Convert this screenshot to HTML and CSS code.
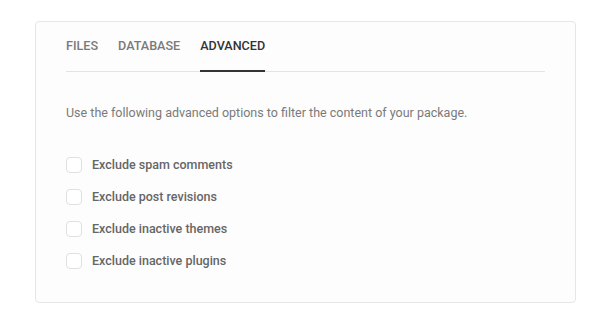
FILE: index.html
```html
<!DOCTYPE html>
<html>
<head>
<meta charset="utf-8">
<link rel="stylesheet" href="styles.css">
</head>
<body>
<div class="card">
  <div class="tabs">
    <div class="tab">FILES</div>
    <div class="tab">DATABASE</div>
    <div class="tab active">ADVANCED</div>
  </div>
  <p class="intro">Use the following advanced options to filter the content of your package.</p>
  <div class="options">
    <label class="option"><span class="box"></span><span>Exclude spam comments</span></label>
    <label class="option"><span class="box"></span><span>Exclude post revisions</span></label>
    <label class="option"><span class="box"></span><span>Exclude inactive themes</span></label>
    <label class="option"><span class="box"></span><span>Exclude inactive plugins</span></label>
  </div>
</div>
</body>
</html>
```
FILE: styles.css
```css
html, body {
  margin: 0;
  padding: 0;
  background: #ffffff;
  font-family: Roboto, "Liberation Sans", sans-serif;
}
.card {
  box-sizing: border-box;
  margin: 21px 0 0 35px;
  width: 541px;
  height: 282px;
  border: 1px solid #e6e6e6;
  border-radius: 4px;
  background: #fdfdfd;
  padding: 16px 30px 0 30px;
}
.tabs {
  display: flex;
  gap: 20px;
  border-bottom: 1px solid #e4e4e4;
}
.tab {
  font-size: 12.6px;
  font-weight: 500;
  line-height: 16px;
  color: #7a7a7a;
  padding-bottom: 16px;
  border-bottom: 2px solid transparent;
  margin-bottom: -1px;
}
.tab.active {
  color: #333333;
  border-bottom-color: #333333;
}
.intro {
  margin: 33px 0 0 0;
  font-size: 12.5px;
  line-height: 16px;
  color: #7a7a7a;
}
.options {
  display: flex;
  flex-direction: column;
  gap: 16px;
  margin-top: 36px;
}
.option {
  display: flex;
  align-items: center;
  gap: 10px;
  font-size: 12.5px;
  font-weight: 500;
  line-height: 16px;
  color: #666666;
}
.box {
  box-sizing: border-box;
  width: 16px;
  height: 16px;
  border: 1px solid #e0e0e0;
  border-radius: 4px;
  background: #ffffff;
}
```
